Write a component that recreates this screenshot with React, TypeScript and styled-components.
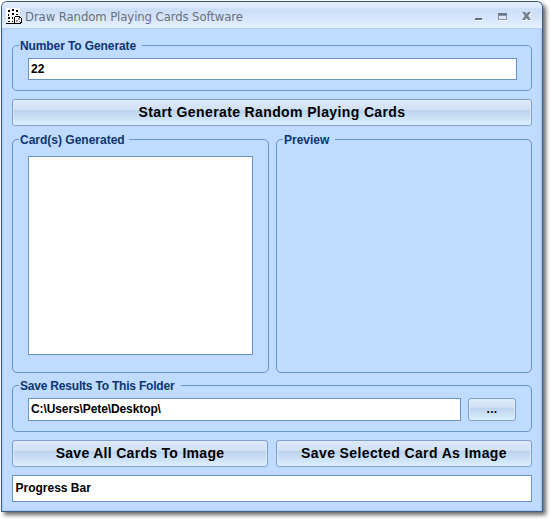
import React from "react";
import styled, { createGlobalStyle } from "styled-components";

const GlobalStyle = createGlobalStyle`
  * { box-sizing: border-box; }
  body { margin: 0; min-height: 519px; padding: 1px 0 0 1px; background: #fff; overflow: hidden; font-family: "Liberation Sans", Arial, sans-serif; }
`;

const Window = styled.main`
  width: 542px;
  height: 511px;
  border: 1px solid #3c5f8c;
  border-top-color: #35566c;
  border-radius: 6px 6px 0 0;
  background: #bfdbff;
  box-shadow: inset 1px 0 #a9c9f2, inset -2px 0 #aecdf5, inset 0 -1px #a9c9f2, 3px 3px 4px rgba(0, 0, 0, 0.6);
`;

const TitleBar = styled.header`
  display: flex;
  align-items: center;
  height: 27px;
  padding: 2px 9px 0 4px;
  border-bottom: 1px solid #b0cff7;
  border-radius: 5px 5px 0 0;
  background: linear-gradient(#e4eefb 0, #d9e7f9 6px, #cadef7 7px, #d5e5fa 16px, #e4effd 25px);
`;

const Title = styled.h1`
  flex: 1;
  margin: 2px 0 0 2px;
  font: 400 13px/18px "DejaVu Sans Condensed", "DejaVu Sans", sans-serif;
  letter-spacing: -0.1px;
  white-space: nowrap;
  color: #69707c;
`;

const Controls = styled.div`
  display: flex;
  gap: 12px;
  svg { display: block; }
`;

const Content = styled.div`
  display: flex;
  flex-direction: column;
  padding: 16px 10px 0;
`;

const Columns = styled.div`
  display: grid;
  grid-template-columns: 257px 256px;
  justify-content: space-between;
`;

const ButtonRow = styled.div`
  display: grid;
  grid-template-columns: 256px 256px;
  justify-content: space-between;
  margin: 8px 0;
`;

const Group = styled.section<{ $height: number; $top?: number }>`
  position: relative;
  display: flex;
  align-items: flex-start;
  gap: 7px;
  height: ${(p) => p.$height}px;
  margin-top: ${(p) => p.$top ?? 0}px;
  padding: 12px 15px 0;
  border: 1px solid #6b94c8;
  border-radius: 5px;
`;

const Legend = styled.h2<{ $width: number; $spacing?: number }>`
  position: absolute;
  top: -7px;
  left: 6px;
  width: ${(p) => p.$width}px;
  margin: 0;
  padding-left: 1px;
  background: #bfdbff;
  color: #0d3570;
  font-size: 12px;
  line-height: 15px;
  letter-spacing: ${(p) => p.$spacing ?? 0}px;
  white-space: nowrap;
`;

const Field = styled.input<{ $width: number; $height: number; $spacing?: number }>`
  flex-shrink: 0;
  width: ${(p) => p.$width}px;
  height: ${(p) => p.$height}px;
  padding: 0 2px 1px;
  border: 1px solid #6a94c8;
  border-radius: 0;
  outline: none;
  background: #fff;
  color: #000;
  font: bold 12px "Liberation Sans", Arial, sans-serif;
  letter-spacing: ${(p) => p.$spacing ?? 0}px;
`;

const CardList = styled.div`
  width: 225px;
  height: 199px;
  margin-top: 4px;
  border: 1px solid #6a94c8;
  background: #fff;
`;

const Button = styled.button<{ $height: number; $spacing?: number }>`
  height: ${(p) => p.$height}px;
  padding: 0 0 1px;
  border: 1px solid #7c9fcc;
  border-radius: 3px;
  background: linear-gradient(#dde9f8 0, #d0e0f3 40%, #bdd3ee 42%, #cbdff6 70%, #dcf0ff 100%);
  box-shadow: inset 0 0 0 1px rgba(226, 240, 255, 0.7);
  color: #000;
  font: bold 14px "Liberation Sans", Arial, sans-serif;
  letter-spacing: ${(p) => p.$spacing ?? 0.38}px;
  white-space: nowrap;
`;

const StartButton = styled(Button)`
  margin: 8px 0 13px;
`;

const BrowseButton = styled(Button)`
  width: 48px;
  font-size: 12px;
`;

const Progress = styled.div`
  height: 27px;
  padding-left: 2.5px;
  border: 1px solid #6a94c8;
  background: #fff;
  font-weight: bold;
  font-size: 12px;
  line-height: 25px;
`;

const DiceIcon = () => (
  <svg width="17" height="17" viewBox="0 0 17 17" shapeRendering="crispEdges">
    <path fill="#fff" d="M0 0h14v16H0z" />
    <path d="M2 2h2v2H2zM6 1h2v2H6zM10 2h2v2h-2zM2 6h1v2H2zM6 5h2v2H6zM10 6h2v1h-2zM2 9h2v2H2zM6 9h1v2H6zM2 13h2v1H2zM6 13h1v1H6zM0 15h9v1H0z" />
    <path d="M9 8h5v1h1v1h1v5h-1v1H8V9h1z" />
    <path fill="#fff" d="M9 9h4v1h2v4h-1v1H9z" />
    <path fill="#98858c" d="M12 10h2v2h-2zM10 12h2v2h-2zM13 13h1v1h-1z" />
  </svg>
);

const WindowControls = () => (
  <Controls>
    <svg width="12" height="13" shapeRendering="crispEdges">
      <path fill="#fff" d="M3 10h7v1H3z" />
      <path fill="#626d7d" d="M2 8h7v2H2z" />
    </svg>
    <svg width="12" height="13" shapeRendering="crispEdges">
      <path fill="#fff" d="M2 10h9v1H2z" />
      <path fill="#8793a5" d="M1 3h9v7H1z" />
      <path fill="#687487" d="M1 3h9v2H1z" />
      <path fill="#d9e7f8" d="M2 6h7v3H2z" />
    </svg>
    <svg width="12" height="13">
      <path fill="#fff" d="M1 3h3l2 2 2-2h3L7.5 7 11 11H8L6 9l-2 2H1l3.5-4z" />
      <path fill="#727d8e" d="M1 2h3l1.5 2L7 2h3L7.2 6 10 10H7L5.5 8 4 10H1l2.8-4z" />
    </svg>
  </Controls>
);

export default function App() {
  return (
    <>
      <GlobalStyle />
      <Window>
        <TitleBar>
          <DiceIcon />
          <Title>Draw Random Playing Cards Software</Title>
          <WindowControls />
        </TitleBar>
        <Content>
          <Group $height={46}>
            <Legend $width={123} $spacing={-0.1}>Number To Generate</Legend>
            <Field $width={489} $height={22} defaultValue="22" aria-label="Number to generate" />
          </Group>
          <StartButton $height={27}>Start Generate Random Playing Cards</StartButton>
          <Columns>
            <Group $height={234}>
              <Legend $width={110}>Card(s) Generated</Legend>
              <CardList />
            </Group>
            <Group $height={234}>
              <Legend $width={52}>Preview</Legend>
            </Group>
          </Columns>
          <Group $height={47} $top={12}>
            <Legend $width={162} $spacing={-0.2}>Save Results To This Folder</Legend>
            <Field $width={433} $height={23} $spacing={-0.1} defaultValue={"C:\\Users\\Pete\\Desktop\\"} aria-label="Folder" />
            <BrowseButton $height={23}>...</BrowseButton>
          </Group>
          <ButtonRow>
            <Button $height={27} $spacing={0.3}>Save All Cards To Image</Button>
            <Button $height={27}>Save Selected Card As Image</Button>
          </ButtonRow>
          <Progress>Progress Bar</Progress>
        </Content>
      </Window>
    </>
  );
}
